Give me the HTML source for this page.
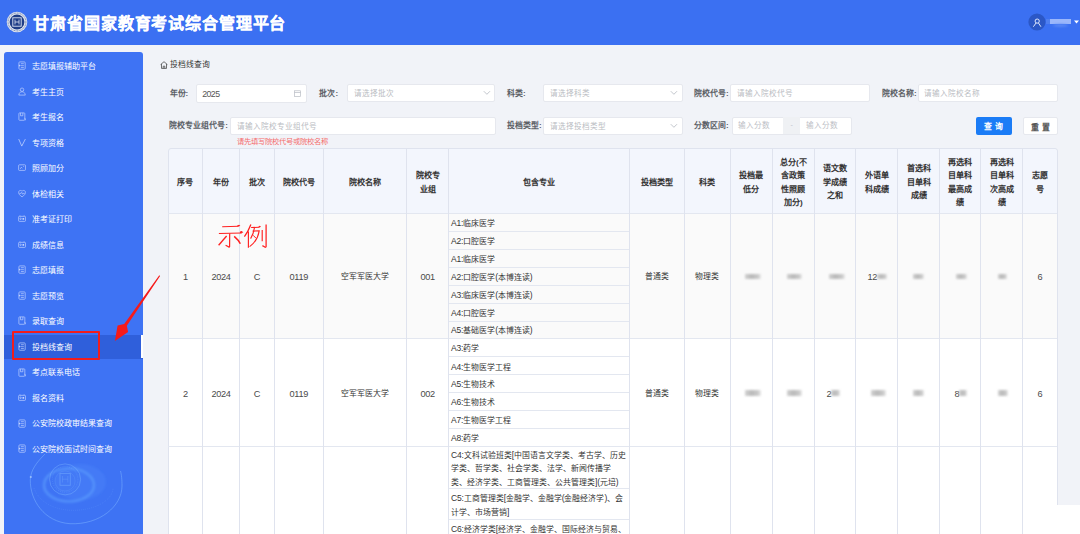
<!DOCTYPE html><html lang="zh-CN"><head><meta charset="utf-8"><style>
*{box-sizing:border-box;margin:0;padding:0}
html,body{width:1080px;height:534px;overflow:hidden;background:#f1f3f8;font-family:"Liberation Sans",sans-serif;color:#333}
.a{position:absolute}
.hdr{left:0;top:0;width:1080px;height:45px;background:#3b70f2}
.title{left:33.3px;top:13.5px;font-size:16px;font-weight:bold;color:#fff;-webkit-text-stroke:0.2px #fff;line-height:20px;letter-spacing:0.87px;white-space:nowrap}
.side{left:4px;top:52px;width:139px;height:482px;background:#3e73f4;border-radius:3px 3px 0 0;overflow:hidden}
.mi{left:0;width:139px;height:24px;color:#fff;font-size:8px;line-height:24px;white-space:nowrap}
.mi span{position:absolute;left:28px;top:0}
.mi svg{position:absolute}
.lbl{font-size:7.9px;font-weight:bold;color:#5c5f66;line-height:10px;white-space:nowrap}
.inp{background:#fff;border:0.6px solid #e6e8ee;border-radius:2px;font-size:7.6px;color:#bdc0c6;line-height:16.2px;padding-left:5.6px;white-space:nowrap}
.th{font-size:8.1px;font-weight:bold;color:#333;line-height:13.5px;padding-top:1.5px;text-align:center;white-space:nowrap}
.td{font-size:7.9px;color:#333;text-align:center;white-space:nowrap;line-height:10px}
.dg{font-size:9.2px;letter-spacing:-0.35px;color:#4a4a4a}
.lt{font-size:8.5px;letter-spacing:-0.2px}
.sub{font-size:7.9px;color:#333;white-space:nowrap;line-height:12.6px}
.vl{width:0.7px;background:#dfe3ee}
.hl{height:0.7px;background:#e3e7f0}
.blob{background:linear-gradient(90deg,#c8c8c8,#a9a9a9 40%,#bdbdbd 80%,#e6e6e6);filter:blur(0.9px);opacity:.8;height:5.6px}
</style></head><body>

<div class="a hdr"></div>
<svg class="a" style="left:6px;top:11px" width="22" height="22" viewBox="0 0 22 22">
<circle cx="11" cy="11" r="10.3" fill="#dfe4ee"/><circle cx="11" cy="11" r="7.4" fill="#1f3d86"/>
<circle cx="11" cy="11" r="8.9" fill="none" stroke="#33508f" stroke-width="0.7" stroke-dasharray="0.9 0.7"/>
<rect x="6.8" y="6.8" width="8.4" height="8.4" fill="none" stroke="#dfe6f5" stroke-width="0.9"/>
<path d="M9 8.6v4.8M13 8.6v4.8M9 11h4" stroke="#dfe6f5" stroke-width="0.8"/></svg>
<div class="a title">甘肃省国家教育考试综合管理平台</div>
<svg class="a" style="left:1028px;top:13px" width="18" height="18" viewBox="0 0 18 18"><circle cx="9" cy="9" r="8.6" fill="#2b57c6"/>
<circle cx="9.2" cy="8.1" r="2.1" fill="none" stroke="#e8eeff" stroke-width="0.95"/><path d="M7.9 10.2L5.6 13.4M10.6 10.2L12.7 13.4" fill="none" stroke="#e8eeff" stroke-width="0.95" stroke-linecap="round"/></svg>
<div class="a" style="left:1045.5px;top:18.6px;width:5px;height:5px;background:#4f7ff0;filter:blur(0.6px)"></div><div class="a" style="left:1050.2px;top:18.6px;width:21.2px;height:5.3px;background:#9bb7fb;filter:blur(0.6px)"></div><div class="a" style="left:1053px;top:24px;width:15px;height:3px;background:#5a88f4;filter:blur(1px);border-radius:50%"></div>
<svg class="a" style="left:1074px;top:20px" width="6" height="5" viewBox="0 0 6 5"><path d="M0 0.5h5l-2.5 3z" fill="#fff"/></svg>
<div class="a side">
<svg class="a" style="left:0;top:385px" width="139" height="97" viewBox="4 437 139 97">
<defs><filter id="bl" x="-50%" y="-50%" width="200%" height="200%"><feGaussianBlur stdDeviation="1.2"/></filter>
<filter id="bl2" x="-50%" y="-50%" width="200%" height="200%"><feGaussianBlur stdDeviation="0.4"/></filter></defs>
<g filter="url(#bl)" fill="none">
<ellipse cx="69" cy="485" rx="25" ry="16.5" stroke="#63a6ff" stroke-opacity="0.55" stroke-width="2.6"/>
<ellipse cx="80" cy="482" rx="26" ry="18" fill="#5b9cff" fill-opacity="0.18" stroke="none"/>
</g>
<g filter="url(#bl2)" fill="none" stroke="#7fb6ff">
<circle cx="65.1" cy="479.4" r="15.5" stroke-opacity="0.45" stroke-width="0.9"/>
<circle cx="65.1" cy="479.4" r="12.8" stroke-opacity="0.3" stroke-width="0.8" stroke-dasharray="1 1.2"/>
<circle cx="65.1" cy="481" r="10" stroke-opacity="0.2" stroke-width="0.8"/>
<rect x="60" y="473.5" width="10.3" height="11.8" stroke-opacity="0.45" stroke-width="0.9"/>
<path d="M62.5 476v6.5M67.8 476v6.5M62.5 479.2h5.3" stroke-opacity="0.35" stroke-width="0.7"/>
<path d="M45 454 C37 462 30.5 470 30.3 480 C30 500 44 522 70 523.7 C100 525 122 506 122 486 C122 479 121.5 475 120.5 471" stroke-opacity="0.55" stroke-width="0.9"/>
<path d="M34 488 C40 505 60 512 80 510 C100 508 113 498 113 488" stroke-opacity="0.25" stroke-width="0.8" stroke-dasharray="0.8 1.2"/>
<circle cx="30.8" cy="477" r="1.1" fill="#b5d4ff" fill-opacity="0.7" stroke="none"/>
</g></svg>
<div class="a mi" style="top:3.20px"><svg width="8.1" height="9.0" viewBox="0 0 9 10" style="left:14.4px;top:6.2px"><g fill="none" stroke="#c3d4ff" stroke-width="0.75"><rect x="1" y="1" width="7" height="8.2" rx="1"/><path d="M3.2 3h3.3M3.2 5.2h3.3M3.2 7.3h3.3"/><circle cx="1.8" cy="5.1" r="0.9" fill="#c3d4ff" stroke="none"/></g></svg><span>志愿填报辅助平台</span></div>
<div class="a mi" style="top:28.71px"><svg width="8.1" height="9.0" viewBox="0 0 9 10" style="left:14.4px;top:6.2px"><g fill="none" stroke="#c3d4ff" stroke-width="0.75"><circle cx="4.5" cy="3" r="1.9"/><path d="M0.9 9c0.3-2.6 1.6-3.7 3.6-3.7s3.3 1.1 3.6 3.7z"/></g></svg><span>考生主页</span></div>
<div class="a mi" style="top:54.22px"><svg width="8.1" height="9.0" viewBox="0 0 9 10" style="left:14.4px;top:6.2px"><g fill="none" stroke="#c3d4ff" stroke-width="0.75"><rect x="1" y="1" width="6.6" height="8.2" rx="0.8"/><path d="M2.8 1v3.2h2.6V1M7.6 6.5l0.8 2.7"/></g></svg><span>考生报名</span></div>
<div class="a mi" style="top:79.73px"><svg width="8.1" height="9.0" viewBox="0 0 9 10" style="left:14.4px;top:6.2px"><g fill="none" stroke="#c3d4ff" stroke-width="0.75"><path d="M0.8 1.2l3.4 7.8 4-7.8" stroke-width="0.85"/></g></svg><span>专项资格</span></div>
<div class="a mi" style="top:105.24px"><svg width="8.1" height="9.0" viewBox="0 0 9 10" style="left:14.4px;top:6.2px"><g fill="none" stroke="#c3d4ff" stroke-width="0.75"><rect x="0.7" y="2" width="7.6" height="6.2" rx="0.8"/><path d="M2.5 6.5l1.3-1.8 1 1.2M5.8 3.8h1"/></g></svg><span>照顾加分</span></div>
<div class="a mi" style="top:130.75px"><svg width="8.1" height="9.0" viewBox="0 0 9 10" style="left:14.4px;top:6.2px"><g fill="none" stroke="#c3d4ff" stroke-width="0.75"><path d="M4.5 8.8C2 7 0.7 5.6 0.7 3.8 0.7 2.5 1.6 1.6 2.7 1.6c0.8 0 1.4 0.4 1.8 1 0.4-0.6 1-1 1.8-1 1.1 0 2 0.9 2 2.2 0 1.8-1.3 3.2-3.8 5z"/><path d="M1.5 4.8h1.8l0.8-1 1 2 0.7-1h1.7"/></g></svg><span>体检相关</span></div>
<div class="a mi" style="top:156.26px"><svg width="8.1" height="9.0" viewBox="0 0 9 10" style="left:14.4px;top:6.2px"><g fill="none" stroke="#c3d4ff" stroke-width="0.75"><rect x="0.7" y="2.6" width="7.6" height="5.6" rx="0.8"/><path d="M2.2 2.6V1.6M6.8 2.6V1.6"/><rect x="5" y="4.4" width="1.8" height="2" fill="#c3d4ff" stroke="none"/><circle cx="2.9" cy="5.3" r="0.8"/></g></svg><span>准考证打印</span></div>
<div class="a mi" style="top:181.77px"><svg width="8.1" height="9.0" viewBox="0 0 9 10" style="left:14.4px;top:6.2px"><g fill="none" stroke="#c3d4ff" stroke-width="0.75"><rect x="0.7" y="2.6" width="7.6" height="5.6" rx="0.8"/><path d="M2.2 2.6V1.6M6.8 2.6V1.6"/><rect x="5" y="4.4" width="1.8" height="2" fill="#c3d4ff" stroke="none"/><circle cx="2.9" cy="5.3" r="0.8"/></g></svg><span>成绩信息</span></div>
<div class="a mi" style="top:207.28px"><svg width="8.1" height="9.0" viewBox="0 0 9 10" style="left:14.4px;top:6.2px"><g fill="none" stroke="#c3d4ff" stroke-width="0.75"><rect x="1" y="1" width="7" height="8.2" rx="1"/><path d="M3.2 3h3.3M3.2 5.2h3.3M3.2 7.3h3.3"/><circle cx="1.8" cy="5.1" r="0.9" fill="#c3d4ff" stroke="none"/></g></svg><span>志愿填报</span></div>
<div class="a mi" style="top:232.79px"><svg width="8.1" height="9.0" viewBox="0 0 9 10" style="left:14.4px;top:6.2px"><g fill="none" stroke="#c3d4ff" stroke-width="0.75"><rect x="1" y="1" width="7" height="8.2" rx="1"/><path d="M3.2 3h3.3M3.2 5.2h3.3M3.2 7.3h3.3"/><circle cx="1.8" cy="5.1" r="0.9" fill="#c3d4ff" stroke="none"/></g></svg><span>志愿预览</span></div>
<div class="a mi" style="top:258.30px"><svg width="8.1" height="9.0" viewBox="0 0 9 10" style="left:14.4px;top:6.2px"><g fill="none" stroke="#c3d4ff" stroke-width="0.75"><rect x="1" y="1" width="6.6" height="8.2" rx="0.8"/><path d="M2.8 1v3.2h2.6V1M7.6 6.5l0.8 2.7"/></g></svg><span>录取查询</span></div>
<div class="a" style="left:0;top:283.00px;width:139px;height:23.5px;background:#2f5fdb"></div>
<div class="a" style="left:136.8px;top:283.1px;width:2.2px;height:22.8px;background:#fff"></div>
<div class="a mi" style="top:283.81px"><svg width="8.1" height="9.0" viewBox="0 0 9 10" style="left:14.4px;top:6.2px"><g fill="none" stroke="#c3d4ff" stroke-width="0.75"><rect x="1" y="1" width="7" height="8.2" rx="1"/><path d="M3.2 3h3.3M3.2 5.2h3.3M3.2 7.3h3.3"/><circle cx="1.8" cy="5.1" r="0.9" fill="#c3d4ff" stroke="none"/></g></svg><span>投档线查询</span></div>
<div class="a mi" style="top:309.32px"><svg width="8.1" height="9.0" viewBox="0 0 9 10" style="left:14.4px;top:6.2px"><g fill="none" stroke="#c3d4ff" stroke-width="0.75"><rect x="1" y="1" width="6.6" height="8.2" rx="0.8"/><path d="M2.8 1v3.2h2.6V1M7.6 6.5l0.8 2.7"/></g></svg><span>考点联系电话</span></div>
<div class="a mi" style="top:334.83px"><svg width="8.1" height="9.0" viewBox="0 0 9 10" style="left:14.4px;top:6.2px"><g fill="none" stroke="#c3d4ff" stroke-width="0.75"><rect x="0.7" y="2.6" width="7.6" height="5.6" rx="0.8"/><path d="M2.2 2.6V1.6M6.8 2.6V1.6"/><rect x="5" y="4.4" width="1.8" height="2" fill="#c3d4ff" stroke="none"/><circle cx="2.9" cy="5.3" r="0.8"/></g></svg><span>报名资料</span></div>
<div class="a mi" style="top:360.34px"><svg width="8.1" height="9.0" viewBox="0 0 9 10" style="left:14.4px;top:6.2px"><g fill="none" stroke="#c3d4ff" stroke-width="0.75"><rect x="1" y="1" width="7" height="8.2" rx="1"/><path d="M3.2 3h3.3M3.2 5.2h3.3M3.2 7.3h3.3"/><circle cx="1.8" cy="5.1" r="0.9" fill="#c3d4ff" stroke="none"/></g></svg><span>公安院校政审结果查询</span></div>
<div class="a mi" style="top:385.85px"><svg width="8.1" height="9.0" viewBox="0 0 9 10" style="left:14.4px;top:6.2px"><g fill="none" stroke="#c3d4ff" stroke-width="0.75"><rect x="1" y="1" width="7" height="8.2" rx="1"/><path d="M3.2 3h3.3M3.2 5.2h3.3M3.2 7.3h3.3"/><circle cx="1.8" cy="5.1" r="0.9" fill="#c3d4ff" stroke="none"/></g></svg><span>公安院校面试时间查询</span></div>
</div>
<div class="a" style="left:12px;top:331px;width:88px;height:29px;border:2px solid #f21d1d;border-radius:1px"></div>
<svg class="a" style="left:0;top:0" width="1080" height="534" viewBox="0 0 1080 534">
<path d="M159.29 275.3 L160.1 275.9 L126.8 325.8 L128.1 332 L114.9 340.9 L117.6 325.6 L124.2 324.0 Z" fill="#f61a1a"/></svg>
<svg class="a" style="left:160px;top:60.5px" width="8" height="8" viewBox="0 0 8 8"><path d="M0.6 3.6L4 0.7l3.4 2.9M1.5 3v4.4h5V3M3.2 7.4V5.2h1.6v2.2" fill="none" stroke="#444" stroke-width="0.75"/></svg>
<div class="a lbl" style="left:169.6px;top:60.3px;font-weight:normal;color:#333;font-size:7.8px">投档线查询</div>
<div class="a lbl" style="left:169.6px;top:89.0px">年份:</div>
<div class="a inp" style="left:195.55px;top:84.45px;width:111.90px;height:18.20px;line-height:18.00px;color:#555"><span style="font-size:8.8px;letter-spacing:-0.55px;padding-left:0px">2025</span></div>
<svg class="a" style="left:294.0px;top:90.0px" width="7" height="7" viewBox="0 0 7 7"><rect x="0.4" y="0.8" width="6.2" height="5.8" fill="none" stroke="#b8bcc4" stroke-width="0.7"/><path d="M0.4 2.5h6.2" stroke="#b8bcc4" stroke-width="0.7"/></svg>
<div class="a lbl" style="left:319.4px;top:89.0px">批次:</div>
<div class="a inp" style="left:347.25px;top:84.25px;width:148.20px;height:18.10px;line-height:17.90px;color:#b9bcc2">请选择批次</div>
<svg class="a" style="left:482.5px;top:90.3px" width="8" height="6" viewBox="0 0 8 6"><path d="M0.8 1.2l3.1 3.1L7 1.2" fill="none" stroke="#b3b7bf" stroke-width="0.8"/></svg>
<div class="a lbl" style="left:507.0px;top:89.0px">科类:</div>
<div class="a inp" style="left:543.15px;top:84.25px;width:139.80px;height:18.10px;line-height:17.90px;color:#b9bcc2">请选择科类</div>
<svg class="a" style="left:670.0px;top:90.3px" width="8" height="6" viewBox="0 0 8 6"><path d="M0.8 1.2l3.1 3.1L7 1.2" fill="none" stroke="#b3b7bf" stroke-width="0.8"/></svg>
<div class="a lbl" style="left:694.0px;top:89.0px">院校代号:</div>
<div class="a inp" style="left:730.25px;top:84.25px;width:140.20px;height:18.10px;line-height:17.90px;color:#b9bcc2">请输入院校代号</div>
<div class="a lbl" style="left:882.0px;top:89.0px">院校名称:</div>
<div class="a inp" style="left:917.55px;top:84.25px;width:140.90px;height:18.10px;line-height:17.90px;color:#b9bcc2">请输入院校名称</div>
<div class="a lbl" style="left:169.3px;top:121.3px">院校专业组代号:</div>
<div class="a inp" style="left:229.95px;top:117.05px;width:265.70px;height:18.10px;line-height:17.90px;color:#b9bcc2">请输入院校专业组代号</div>
<div class="a lbl" style="left:507.0px;top:121.3px">投档类型:</div>
<div class="a inp" style="left:543.15px;top:117.05px;width:139.80px;height:18.10px;line-height:17.90px;color:#b9bcc2">请选择投档类型</div>
<svg class="a" style="left:670.0px;top:123.1px" width="8" height="6" viewBox="0 0 8 6"><path d="M0.8 1.2l3.1 3.1L7 1.2" fill="none" stroke="#b3b7bf" stroke-width="0.8"/></svg>
<div class="a lbl" style="left:694.0px;top:121.3px">分数区间:</div>
<div class="a" style="left:731.5px;top:116.8px;width:120.5px;height:17.9px;background:#fff;border:0.6px solid #e6e8ee;border-radius:2px"></div>
<div class="a" style="left:783.2px;top:117.4px;width:16.8px;height:16.8px;background:#eff1f4;color:#c0c4cc;font-size:7px;text-align:center;line-height:16.2px">-</div>
<div class="a inp" style="left:732px;top:117.4px;width:51px;height:17.4px;line-height:17.4px;border:none;background:transparent">输入分数</div>
<div class="a inp" style="left:800.5px;top:117.4px;width:51px;height:17.4px;line-height:17.4px;border:none;background:transparent">输入分数</div>
<div class="a" style="left:975.6px;top:116.7px;width:36px;height:18.5px;background:#1b7cf6;border-radius:2px;color:#fff;font-size:7.9px;font-weight:bold;text-align:center;line-height:19.5px;letter-spacing:3px;padding-left:3px">查询</div>
<div class="a" style="left:1022.6px;top:116.7px;width:35px;height:18.5px;background:#fff;border:0.6px solid #e6e8ee;border-radius:2px;color:#555;font-size:7.9px;font-weight:600;text-align:center;line-height:19px;letter-spacing:3px;padding-left:3px">重置</div>
<div class="a" style="left:236.7px;top:137.2px;font-size:7.3px;color:#f56c6c;line-height:10px;white-space:nowrap">请先填写院校代号或院校名称</div>
<div class="a" style="left:168.3px;top:148.5px;width:889px;height:390px;background:#fff;border-radius:3px 3px 0 0"></div>
<div class="a" style="left:168.3px;top:148.5px;width:889px;height:65px;background:#f3f6fd;border-radius:3px 3px 0 0"></div>
<div class="a" style="left:168.3px;top:213.5px;width:889px;height:124.8px;background:#fafafa"></div>
<div class="a th" style="left:168.3px;top:174.2px;width:34.2px">序号</div>
<div class="a th" style="left:202.5px;top:174.2px;width:37.0px">年份</div>
<div class="a th" style="left:239.5px;top:174.2px;width:34.9px">批次</div>
<div class="a th" style="left:274.4px;top:174.2px;width:48.7px">院校代号</div>
<div class="a th" style="left:323.1px;top:174.2px;width:83.6px">院校名称</div>
<div class="a th" style="left:406.7px;top:167.5px;width:42.0px">院校专<br>业组</div>
<div class="a th" style="left:448.7px;top:174.2px;width:180.6px">包含专业</div>
<div class="a th" style="left:629.3px;top:174.2px;width:55.1px">投档类型</div>
<div class="a th" style="left:684.4px;top:174.2px;width:46.0px">科类</div>
<div class="a th" style="left:730.4px;top:167.5px;width:42.0px">投档最<br>低分</div>
<div class="a th" style="left:772.4px;top:154.0px;width:41.8px">总分(不<br>含政策<br>性照顾<br>加分)</div>
<div class="a th" style="left:814.2px;top:160.8px;width:41.4px">语文数<br>学成绩<br>之和</div>
<div class="a th" style="left:855.6px;top:167.5px;width:42.2px">外语单<br>科成绩</div>
<div class="a th" style="left:897.8px;top:160.8px;width:41.8px">首选科<br>目单科<br>成绩</div>
<div class="a th" style="left:939.6px;top:154.0px;width:40.8px">再选科<br>目单科<br>最高成<br>绩</div>
<div class="a th" style="left:980.4px;top:154.0px;width:42.3px">再选科<br>目单科<br>次高成<br>绩</div>
<div class="a th" style="left:1022.7px;top:167.5px;width:34.6px">志愿<br>号</div>
<div class="a" style="left:167.95px;top:148.15px;width:889.7px;height:400px;border:0.7px solid #dfe3ee;border-radius:3px 3px 0 0"></div>
<div class="a hl" style="left:168.3px;top:213.2px;width:889px"></div>
<div class="a hl" style="left:168.3px;top:337.9px;width:889px"></div>
<div class="a hl" style="left:168.3px;top:446.0px;width:889px"></div>
<div class="a vl" style="left:202.2px;top:148.5px;height:385.5px"></div>
<div class="a vl" style="left:239.2px;top:148.5px;height:385.5px"></div>
<div class="a vl" style="left:274.0px;top:148.5px;height:385.5px"></div>
<div class="a vl" style="left:322.8px;top:148.5px;height:385.5px"></div>
<div class="a vl" style="left:406.3px;top:148.5px;height:385.5px"></div>
<div class="a vl" style="left:448.3px;top:148.5px;height:385.5px"></div>
<div class="a vl" style="left:628.9px;top:148.5px;height:385.5px"></div>
<div class="a vl" style="left:684.0px;top:148.5px;height:385.5px"></div>
<div class="a vl" style="left:730.0px;top:148.5px;height:385.5px"></div>
<div class="a vl" style="left:772.0px;top:148.5px;height:385.5px"></div>
<div class="a vl" style="left:813.9px;top:148.5px;height:385.5px"></div>
<div class="a vl" style="left:855.2px;top:148.5px;height:385.5px"></div>
<div class="a vl" style="left:897.4px;top:148.5px;height:385.5px"></div>
<div class="a vl" style="left:939.2px;top:148.5px;height:385.5px"></div>
<div class="a vl" style="left:980.0px;top:148.5px;height:385.5px"></div>
<div class="a vl" style="left:1022.4px;top:148.5px;height:385.5px"></div>
<div class="a hl" style="left:448.7px;top:230.8px;width:180.6px"></div>
<div class="a hl" style="left:448.7px;top:249.2px;width:180.6px"></div>
<div class="a hl" style="left:448.7px;top:267.0px;width:180.6px"></div>
<div class="a hl" style="left:448.7px;top:284.8px;width:180.6px"></div>
<div class="a hl" style="left:448.7px;top:302.6px;width:180.6px"></div>
<div class="a hl" style="left:448.7px;top:320.5px;width:180.6px"></div>
<div class="a hl" style="left:448.7px;top:356.3px;width:180.6px"></div>
<div class="a hl" style="left:448.7px;top:374.3px;width:180.6px"></div>
<div class="a hl" style="left:448.7px;top:392.2px;width:180.6px"></div>
<div class="a hl" style="left:448.7px;top:410.1px;width:180.6px"></div>
<div class="a hl" style="left:448.7px;top:428.1px;width:180.6px"></div>
<div class="a hl" style="left:448.7px;top:488.0px;width:180.6px"></div>
<div class="a hl" style="left:448.7px;top:518.5px;width:180.6px"></div>
<div class="a sub" style="left:451px;top:217.2px"><span class="lt">A1:</span>临床医学</div>
<div class="a sub" style="left:451px;top:235.2px"><span class="lt">A2:</span>口腔医学</div>
<div class="a sub" style="left:451px;top:253.3px"><span class="lt">A1:</span>临床医学</div>
<div class="a sub" style="left:451px;top:271.1px"><span class="lt">A2:</span>口腔医学<span class="lt">(</span>本博连读<span class="lt">)</span></div>
<div class="a sub" style="left:451px;top:288.9px"><span class="lt">A3:</span>临床医学<span class="lt">(</span>本博连读<span class="lt">)</span></div>
<div class="a sub" style="left:451px;top:306.8px"><span class="lt">A4:</span>口腔医学</div>
<div class="a sub" style="left:451px;top:324.4px"><span class="lt">A5:</span>基础医学<span class="lt">(</span>本博连读<span class="lt">)</span></div>
<div class="a sub" style="left:451px;top:342.3px"><span class="lt">A3:</span>药学</div>
<div class="a sub" style="left:451px;top:360.5px"><span class="lt">A4:</span>生物医学工程</div>
<div class="a sub" style="left:451px;top:378.4px"><span class="lt">A5:</span>生物技术</div>
<div class="a sub" style="left:451px;top:396.4px"><span class="lt">A6:</span>生物技术</div>
<div class="a sub" style="left:451px;top:414.3px"><span class="lt">A7:</span>生物医学工程</div>
<div class="a sub" style="left:451px;top:432.2px"><span class="lt">A8:</span>药学</div>
<div class="a sub" style="left:451px;top:449px;line-height:12.75px"><span class="lt">C4:</span>文科试验班类<span class="lt">[</span>中国语言文学类、考古学、历史<br>学类、哲学类、社会学类、法学、新闻传播学<br>类、经济学类、工商管理类、公共管理类<span class="lt">](</span>元培<span class="lt">)</span></div>
<div class="a sub" style="left:451px;top:491.8px;line-height:12.75px"><span class="lt">C5:</span>工商管理类<span class="lt">[</span>金融学、金融学<span class="lt">(</span>金融经济学<span class="lt">)</span>、会<br>计学、市场营销<span class="lt">]</span></div>
<div class="a sub" style="left:451px;top:522.5px"><span class="lt">C6:</span>经济学类<span class="lt">[</span>经济学、金融学、国际经济与贸易、</div>
<div class="a td" style="left:168.3px;top:272.1px;width:34.2px"><span class="dg">1</span></div>
<div class="a td" style="left:202.5px;top:272.1px;width:37.0px"><span class="dg">2024</span></div>
<div class="a td" style="left:239.5px;top:272.1px;width:34.9px"><span class="dg">C</span></div>
<div class="a td" style="left:274.4px;top:272.1px;width:48.7px"><span class="dg">0119</span></div>
<div class="a td" style="left:323.1px;top:272.1px;width:83.6px">空军军医大学</div>
<div class="a td" style="left:406.7px;top:272.1px;width:42.0px"><span class="dg">001</span></div>
<div class="a td" style="left:629.3px;top:272.1px;width:55.1px">普通类</div>
<div class="a td" style="left:684.4px;top:272.1px;width:46.0px">物理类</div>
<div class="a td" style="left:1022.7px;top:272.1px;width:34.6px"><span class="dg">6</span></div>
<div class="a blob" style="left:745.0px;top:273.7px;width:16.0px"></div>
<div class="a blob" style="left:787.0px;top:273.7px;width:15.0px"></div>
<div class="a blob" style="left:829.0px;top:273.7px;width:16.0px"></div>
<div class="a td" style="left:867.5px;top:272.1px;text-align:left;color:#555"><span class="dg">12</span></div>
<div class="a blob" style="left:877.0px;top:273.7px;width:10.0px"></div>
<div class="a blob" style="left:913.0px;top:273.7px;width:11.0px"></div>
<div class="a blob" style="left:956.0px;top:273.7px;width:11.0px"></div>
<div class="a blob" style="left:998.0px;top:273.7px;width:9.0px"></div>
<div class="a td" style="left:168.3px;top:388.6px;width:34.2px"><span class="dg">2</span></div>
<div class="a td" style="left:202.5px;top:388.6px;width:37.0px"><span class="dg">2024</span></div>
<div class="a td" style="left:239.5px;top:388.6px;width:34.9px"><span class="dg">C</span></div>
<div class="a td" style="left:274.4px;top:388.6px;width:48.7px"><span class="dg">0119</span></div>
<div class="a td" style="left:323.1px;top:388.6px;width:83.6px">空军军医大学</div>
<div class="a td" style="left:406.7px;top:388.6px;width:42.0px"><span class="dg">002</span></div>
<div class="a td" style="left:629.3px;top:388.6px;width:55.1px">普通类</div>
<div class="a td" style="left:684.4px;top:388.6px;width:46.0px">物理类</div>
<div class="a td" style="left:1022.7px;top:388.6px;width:34.6px"><span class="dg">6</span></div>
<div class="a blob" style="left:745.0px;top:390.2px;width:16.0px"></div>
<div class="a blob" style="left:787.0px;top:390.2px;width:15.0px"></div>
<div class="a td" style="left:826.5px;top:388.6px;text-align:left;color:#555"><span class="dg">2</span></div>
<div class="a blob" style="left:831.0px;top:390.2px;width:9.0px"></div>
<div class="a blob" style="left:871.0px;top:390.2px;width:15.0px"></div>
<div class="a blob" style="left:913.0px;top:390.2px;width:11.0px"></div>
<div class="a td" style="left:954.5px;top:388.6px;text-align:left;color:#555"><span class="dg">8</span></div>
<div class="a blob" style="left:959.0px;top:390.2px;width:8.0px"></div>
<div class="a blob" style="left:998.0px;top:390.2px;width:10.0px"></div>
<div class="a" style="left:1057.3px;top:505px;width:23px;height:29px;background:#fff"></div>
<svg class="a" style="left:0;top:0" width="1080" height="534" viewBox="0 0 1080 534"><g fill="none" stroke="#ff2020" stroke-width="1.05" stroke-linecap="butt">
<path d="M222.2 226.7L238.6 226.2"/><path d="M237.4 225.2l1.8 -0.4l1.2 1.2l-3 0.4z" fill="#ff2020" stroke="none"/>
<path d="M218.9 233.6L241.8 232.9"/><path d="M240 231.6l1.8 -0.6l1.6 1.6l-3.4 0.6z" fill="#ff2020" stroke="none"/>
<path d="M229.7 233.4L229.6 246.6Q229.3 247.6 228 246.5L225.6 245.2" stroke-width="1.2"/>
<path d="M226.6 236.0L218.6 245.2" stroke-width="1.3"/>
<path d="M234.2 236.4Q238.5 240 240.3 243.8" stroke-width="1.5"/>
<path d="M250.9 224.6Q248 232 244.4 236.6" stroke-width="1.3"/>
<path d="M248.4 231.6L248.4 247.8" stroke-width="1.15"/>
<path d="M251.1 227.6L259.6 227.2"/><path d="M258.6 226.2l1.3 -0.5l1.2 1.3l-2.4 0.3z" fill="#ff2020" stroke="none"/>
<path d="M254.5 227.6Q253.5 234 250.6 238.6" stroke-width="1.1"/>
<path d="M252.6 231.1L259.2 230.8Q257.5 241 249.6 246.6" stroke-width="1.1"/>
<path d="M253.2 235.3L255.9 238.1" stroke-width="1.0"/>
<path d="M262.2 229.9L262.2 241.3" stroke-width="1.15"/>
<path d="M266.1 224.6L266.1 246.6Q265.8 247.8 264.4 246.8L262.4 245.6" stroke-width="1.25"/>
</g></svg>
</body></html>
